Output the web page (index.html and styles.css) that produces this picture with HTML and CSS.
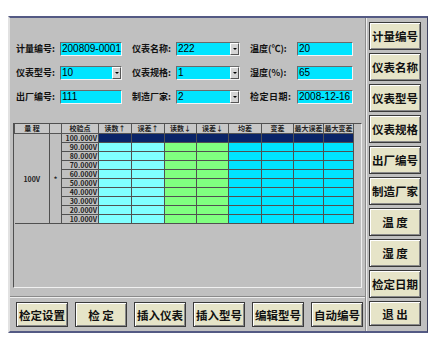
FILE: index.html
```html
<!DOCTYPE html>
<html lang="zh">
<head>
    <meta charset="UTF-8">
    <title>检定记录</title>
    <link rel="stylesheet" href="styles.css">
</head>
<body>
    <div class="window">
        <div class="main">
            <div class="form">
                <span class="label">计量编号:</span>
                <div class="field">200809-0001</div>
                <span></span>
                <span class="label">仪表名称:</span>
                <div class="field select">222<span class="drop"></span></div>
                <span></span>
                <span class="label">温度(℃):</span>
                <div class="field">20</div>

                <span class="label">仪表型号:</span>
                <div class="field select">10<span class="drop"></span></div>
                <span></span>
                <span class="label">仪表规格:</span>
                <div class="field select">1<span class="drop"></span></div>
                <span></span>
                <span class="label">湿度(%):</span>
                <div class="field">65</div>

                <span class="label">出厂编号:</span>
                <div class="field">111</div>
                <span></span>
                <span class="label">制造厂家:</span>
                <div class="field select">2<span class="drop"></span></div>
                <span></span>
                <span class="label spaced">检定日期:</span>
                <div class="field">2008-12-16</div>
            </div>

            <div class="grid-box">
                <table class="grid">
                    <colgroup>
                        <col style="width:35px"><col style="width:12px"><col style="width:37px">
                        <col style="width:33px"><col style="width:33px"><col style="width:32px">
                        <col style="width:32px"><col style="width:33px"><col style="width:32px">
                        <col style="width:30px"><col style="width:30px">
                    </colgroup>
                    <thead>
                        <tr>
                            <th>量 程</th><th></th><th>校验点</th>
                            <th>读数↑</th><th>误差↑</th><th>读数↓</th><th>误差↓</th>
                            <th>均差</th><th>变差</th><th>最大误差</th><th>最大变差</th>
                        </tr>
                    </thead>
                    <tbody id="rows"></tbody>
                </table>
            </div>

            <div class="bottom">
                <button class="btn">检定设置</button>
                <button class="btn">检 定</button>
                <button class="btn">插入仪表</button>
                <button class="btn">插入型号</button>
                <button class="btn">编辑型号</button>
                <button class="btn">自动编号</button>
            </div>
        </div>

        <div class="side">
            <button class="btn">计量编号</button>
            <button class="btn">仪表名称</button>
            <button class="btn">仪表型号</button>
            <button class="btn">仪表规格</button>
            <button class="btn">出厂编号</button>
            <button class="btn">制造厂家</button>
            <button class="btn">温 度</button>
            <button class="btn">湿 度</button>
            <button class="btn">检定日期</button>
            <button class="btn last">退 出</button>
        </div>
    </div>

    <script>
        const points = ['100.000V', '90.000V', '80.000V', '70.000V', '60.000V',
                        '50.000V', '40.000V', '30.000V', '20.000V', '10.000V'];
        const body = document.getElementById('rows');

        points.forEach((p, i) => {
            const tr = document.createElement('tr');
            if (i === 0) {
                tr.className = 'selected';
                tr.innerHTML = '<td class="range" rowspan="10">100V</td><td class="mark" rowspan="10">*</td>';
            }
            tr.innerHTML += '<td class="point">' + p + '</td>' +
                '<td class="up"></td><td class="up"></td>' +
                '<td class="down"></td><td class="down"></td>' +
                '<td class="calc"></td><td class="calc"></td><td class="calc"></td><td class="calc"></td>';
            body.appendChild(tr);
        });
    </script>
</body>
</html>
```

FILE: styles.css
```css
body {
    margin: 0;
    padding: 0;
    background-color: #fff;
    font-family: "Noto Sans CJK SC", "Liberation Sans", sans-serif;
}

.window {
    margin: 16px 0 0 8px;
    width: 420px;
    height: 317px;
    box-sizing: border-box;
    background: #c0c0c0;
    border-top: 2px solid #545a84;
    border-bottom: 2px solid #545a84;
    border-left: 2px solid #e2e2e2;
    border-right: 1px solid #3e4260;
    display: flex;
}

.main {
    width: 355px;
    display: flex;
    flex-direction: column;
}

/* form fields */
.form {
    height: 105px;
    box-sizing: border-box;
    padding: 24px 0 0 6px;
    display: grid;
    grid-template-columns: 44px 62px 10px 44px 64px 10px 47px 56px;
    grid-auto-rows: 14px;
    row-gap: 10px;
    align-items: center;
}

.label {
    font-size: 9px;
    font-weight: bold;
    color: #111;
    white-space: nowrap;
    line-height: 14px;
}

.spaced {
    letter-spacing: 0.5px;
}

.field {
    position: relative;
    height: 14px;
    box-sizing: border-box;
    background: #00e4ff;
    border-top: 1px solid #6a6a6a;
    border-left: 1px solid #6a6a6a;
    border-bottom: 1px solid #f4f4f4;
    border-right: 1px solid #f4f4f4;
    font-family: "Liberation Sans", sans-serif;
    font-size: 10px;
    line-height: 12px;
    padding-left: 1px;
    color: #000;
}

.drop {
    position: absolute;
    right: 0;
    top: 0;
    width: 9px;
    height: 12px;
    box-sizing: border-box;
    background: #d4d4d4;
    border-left: 1px solid #fff;
    border-top: 1px solid #fff;
    border-right: 1px solid #555;
    border-bottom: 1px solid #555;
}

.drop::after {
    content: "";
    position: absolute;
    left: 2px;
    top: 4px;
    border-left: 2px solid transparent;
    border-right: 2px solid transparent;
    border-top: 2px solid #000;
}

/* grid */
.grid-box {
    margin-left: 3px;
    width: 349px;
    height: 165px;
    box-sizing: border-box;
    border-top: 1px solid #505050;
    border-left: 1px solid #505050;
    border-bottom: 1px solid #f0f0f0;
    border-right: 1px solid #f0f0f0;
}

.grid {
    border-collapse: collapse;
    table-layout: fixed;
    width: 339px;
    font-size: 7px;
    font-weight: bold;
}

.grid th {
    height: 9px;
    padding: 0;
    background: #c8c8c8;
    border: 1px solid #555;
    border-top: 0;
    line-height: 9px;
    white-space: nowrap;
    overflow: hidden;
    color: #222;
}

.grid td {
    height: 8px;
    padding: 0;
    border: 1px solid #505050;
    line-height: 8px;
}

.grid td.range,
.grid td.mark {
    background: #c0c0c0;
    text-align: center;
    border-left: 0;
    color: #222;
}

.grid td.point {
    background: #c0c0c0;
    text-align: right;
    padding-right: 1px;
    color: #222;
    white-space: nowrap;
}

.grid td.up {
    background: #80ffff;
}

.grid td.down {
    background: #80ff80;
}

.grid td.calc {
    background: #00e4ff;
}

.grid tr.selected td.up,
.grid tr.selected td.down,
.grid tr.selected td.calc {
    background: #0a2468;
}

/* buttons */
.btn {
    width: 52px;
    height: 28px;
    padding: 0;
    background: #e6e4c8;
    border: 1px solid #3a3a3a;
    box-shadow: inset 1px 1px #fff, inset -1px -1px #8a8a8a;
    font-family: "Noto Sans CJK SC", sans-serif;
    font-size: 11.5px;
    font-weight: bold;
    color: #111;
    white-space: nowrap;
}

.bottom {
    margin-top: 8px;
    border-top: 1px solid #8a8a8a;
    box-shadow: inset 0 1px #eee;
    padding: 5px 0 0 6px;
    display: flex;
    gap: 7px;
}

.bottom .btn {
    height: 25px;
}

.side {
    flex: 1;
    border-left: 1px solid #8a8a8a;
    box-shadow: inset 1px 0 #eee;
    padding: 4px 0 0 3px;
    display: flex;
    flex-direction: column;
    gap: 3px;
}

.side .btn.last {
    height: 25px;
}
```
